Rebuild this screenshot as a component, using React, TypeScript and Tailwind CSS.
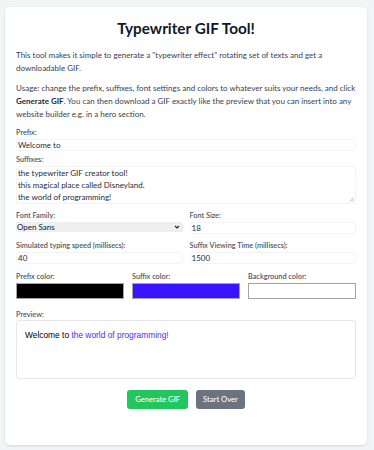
import React from "react";

const F = { fontFamily: "Lato, 'Noto Sans', sans-serif" };

function Label({ children }: { children: React.ReactNode }) {
  return <div className="text-[7.3px] leading-[9px] font-semibold text-[#4b5563]">{children}</div>;
}

function TextInput({ value }: { value: string }) {
  return (
    <div className="mt-[2px] h-[12px] w-full rounded-[3px] border border-[#f3f4f6] bg-white px-[1px] text-[8px] leading-[10px] text-[#1f2937]">
      {value}
    </div>
  );
}

export default function App() {
  return (
    <div className="min-h-[450px] w-full bg-[#f3f4f6] pt-[7px] px-[5px]" style={F}>
      <div className="h-[438px] w-[362px] rounded-[5px] bg-white px-[11px] pt-[12px] shadow-[0_1px_3px_rgba(0,0,0,0.12)]">
        <h1 className="text-center text-[15.3px] leading-[18px] font-bold text-[#111827]">Typewriter GIF Tool!</h1>
        <p className="mt-[12px] text-[8px] leading-[13px] text-[#374151]">
          This tool makes it simple to generate a "typewriter effect" rotating set of texts and get a downloadable GIF.
        </p>
        <p className="mt-[7px] text-[8px] leading-[13px] text-[#374151]">
          Usage: change the prefix, suffixes, font settings and colors to whatever suits your needs, and click{" "}
          <b className="font-bold text-[#1f2937]">Generate GIF</b>. You can then download a GIF exactly like the preview that you can insert into any website builder e.g. in a hero section.
        </p>

        <div className="mt-[7px]">
          <Label>Prefix:</Label>
          <TextInput value="Welcome to" />
        </div>
        <div className="mt-[4px]">
          <Label>Suffixes:</Label>
          <div className="relative mt-[2px] h-[38px] w-full rounded-[3px] border border-[#f3f4f6] bg-white px-[1px] text-[8px] leading-[12px] text-[#1f2937]">
            <div>the typewriter GIF creator tool!</div>
            <div>this magical place called Disneyland.</div>
            <div>the world of programming!</div>
            <svg className="absolute right-[1px] bottom-[1px]" width="5" height="5" viewBox="0 0 5 5">
              <path d="M4.5 1 L1 4.5 M4.5 3 L3 4.5" stroke="#9ca3af" strokeWidth="0.8" />
            </svg>
          </div>
        </div>

        <div className="mt-[7px] grid grid-cols-2 gap-x-[7px] gap-y-[7px]">
          <div>
            <Label>Font Family:</Label>
            <div className="mt-[2px] flex h-[10px] items-center justify-between rounded-[2px] bg-[#efefef] pl-[1px] pr-[3px] text-[8px] leading-[10px] text-[#111827]">
              <span>Open Sans</span>
              <svg width="6" height="4" viewBox="0 0 6 4"><path d="M1 1 L3 3 L5 1" stroke="#222" strokeWidth="1.1" fill="none" /></svg>
            </div>
          </div>
          <div>
            <Label>Font Size:</Label>
            <TextInput value="18" />
          </div>
          <div>
            <Label>Simulated typing speed (millisecs):</Label>
            <TextInput value="40" />
          </div>
          <div>
            <Label>Suffix Viewing Time (millisecs):</Label>
            <TextInput value="1500" />
          </div>
        </div>

        <div className="mt-[8px] grid grid-cols-3 gap-x-[8px]">
          {[
            ["Prefix color:", "#000000"],
            ["Suffix color:", "#3a14ff"],
            ["Background color:", "#ffffff"],
          ].map(([l, c]) => (
            <div key={l}>
              <Label>{l}</Label>
              <div className="mt-[2px] h-[16px] w-full border border-[#a3a3a3]" style={{ backgroundColor: c }} />
            </div>
          ))}
        </div>

        <div className="mt-[11px]">
          <Label>Preview:</Label>
          <div className="mt-[1px] h-[59px] w-full rounded-[3px] border border-[#e5e7eb] bg-white px-[8px] pt-[8px] text-[8.4px] leading-[12px]" style={{ fontFamily: "'Liberation Sans', Arial, sans-serif" }}>
            <span className="text-black">Welcome to </span>
            <span className="text-[#4a2bff]">the world of programming!</span>
          </div>
        </div>

        <div className="mt-[11px] flex justify-center gap-[8px]">
          <button className="h-[19px] rounded-[3px] bg-[#22c55e] px-[8px] text-[7.6px] font-medium text-white">Generate GIF</button>
          <button className="h-[19px] rounded-[3px] bg-[#6b7280] px-[7px] text-[7.6px] font-medium text-white">Start Over</button>
        </div>
      </div>
    </div>
  );
}
